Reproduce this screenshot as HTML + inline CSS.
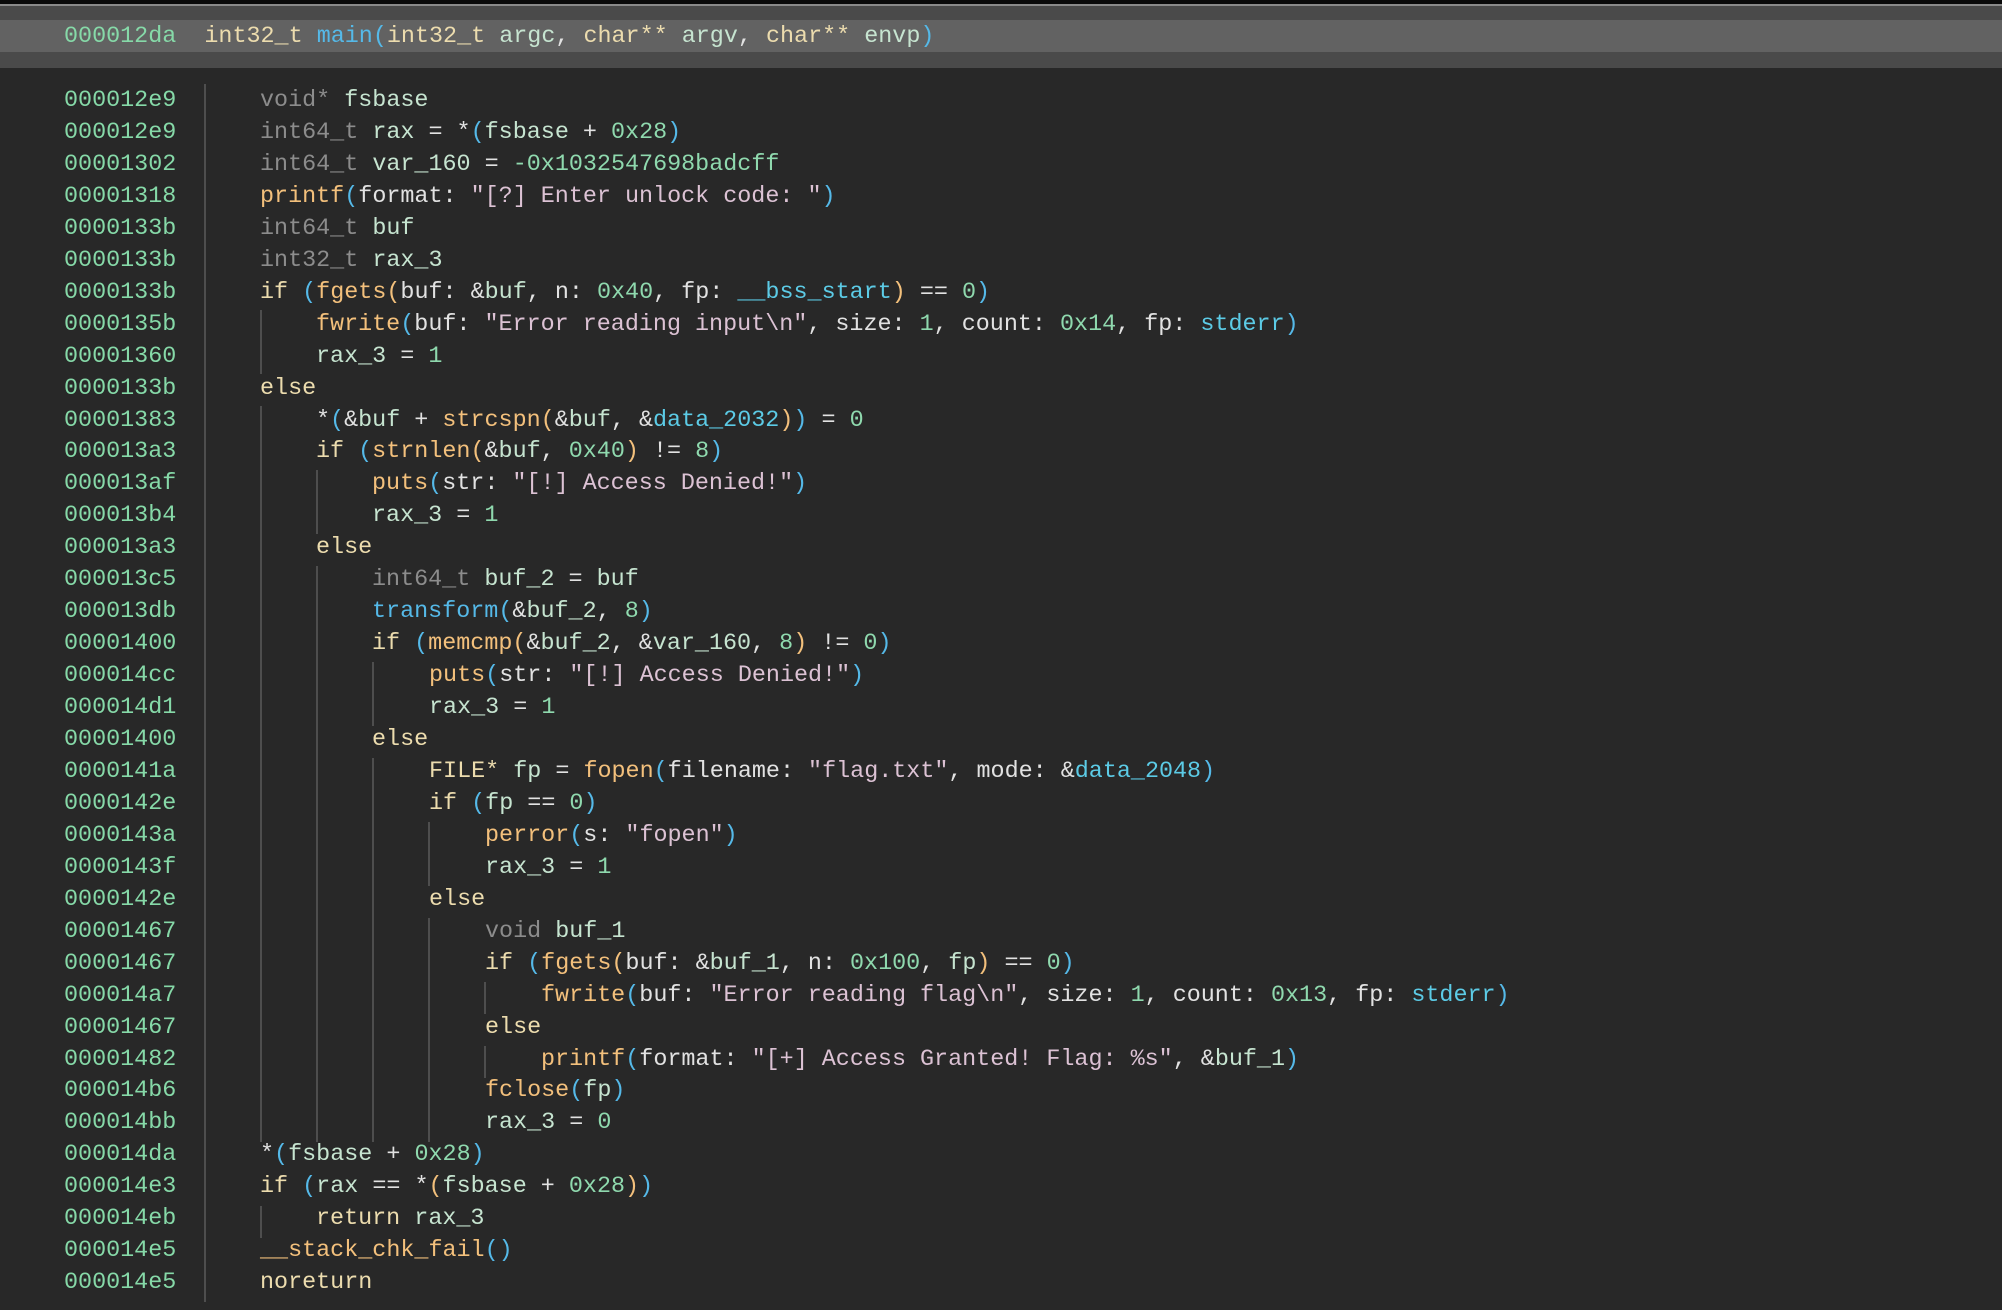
<!DOCTYPE html>
<html><head><meta charset="utf-8"><style>
html,body{margin:0;padding:0;}
body{width:2002px;height:1310px;background:#282828;position:relative;overflow:hidden;font-family:"Liberation Mono",monospace;font-size:23.4px;}
.top{position:absolute;left:0;top:0;width:2002px;height:4px;background:#0a0a0a;}
.top2{position:absolute;left:0;top:4px;width:2002px;height:2px;background:#8a8a8a;}
.hdr{position:absolute;left:0;top:6px;width:2002px;height:62px;background:#4a4a4a;}
.band{position:absolute;left:0;top:20px;width:2002px;height:32px;background:#626262;}
.l{position:absolute;white-space:pre;height:32px;line-height:32px;color:#e2e2e2;}
.g{position:absolute;width:2px;background:#4e4e4e;}
.a{color:#86d9a8}.t{color:#8c8c8c}.v{color:#c6e4d0}.f{color:#f3c07c}.k{color:#ecdcae}.s{color:#dcc2d4}.n{color:#8fd9ae}.p{color:#55b9e8}.o{color:#f3c07c}.d{color:#5ccbe6}.m{color:#55b9e8}
</style></head><body>
<div class="top"></div><div class="top2"></div><div class="hdr"></div><div class="band"></div>
<div class="l" style="left:64px;top:21px"><span class="a">000012da</span>  <span class="k">int32_t</span> <span class="m">main</span><span class="p">(</span><span class="k">int32_t</span> <span class="v">argc</span>, <span class="k">char**</span> <span class="v">argv</span>, <span class="k">char**</span> <span class="v">envp</span><span class="p">)</span></div>

<div class="g" style="left:204px;top:84px;height:1218px"></div>
<div class="g" style="left:260px;top:310px;height:64px"></div>
<div class="g" style="left:260px;top:406px;height:736px"></div>
<div class="g" style="left:260px;top:1206px;height:32px"></div>
<div class="g" style="left:316px;top:470px;height:64px"></div>
<div class="g" style="left:316px;top:566px;height:576px"></div>
<div class="g" style="left:372px;top:662px;height:64px"></div>
<div class="g" style="left:372px;top:758px;height:384px"></div>
<div class="g" style="left:428px;top:822px;height:64px"></div>
<div class="g" style="left:428px;top:918px;height:224px"></div>
<div class="g" style="left:484px;top:982px;height:32px"></div>
<div class="g" style="left:484px;top:1046px;height:32px"></div>

<div id="c"></div>
<script>
var L=[
["000012e9",0,'<span class="t">void*</span> <span class="v">fsbase</span>'],
["000012e9",0,'<span class="t">int64_t</span> <span class="v">rax</span> = *<span class="p">(</span><span class="v">fsbase</span> + <span class="n">0x28</span><span class="p">)</span>'],
["00001302",0,'<span class="t">int64_t</span> <span class="v">var_160</span> = <span class="n">-0x1032547698badcff</span>'],
["00001318",0,'<span class="f">printf</span><span class="p">(</span>format: <span class="s">"[?] Enter unlock code: "</span><span class="p">)</span>'],
["0000133b",0,'<span class="t">int64_t</span> <span class="v">buf</span>'],
["0000133b",0,'<span class="t">int32_t</span> <span class="v">rax_3</span>'],
["0000133b",0,'<span class="k">if</span> <span class="p">(</span><span class="f">fgets</span><span class="o">(</span>buf: &amp;<span class="v">buf</span>, n: <span class="n">0x40</span>, fp: <span class="d">__bss_start</span><span class="o">)</span> == <span class="n">0</span><span class="p">)</span>'],
["0000135b",1,'<span class="f">fwrite</span><span class="p">(</span>buf: <span class="s">"Error reading input\\n"</span>, size: <span class="n">1</span>, count: <span class="n">0x14</span>, fp: <span class="d">stderr</span><span class="p">)</span>'],
["00001360",1,'<span class="v">rax_3</span> = <span class="n">1</span>'],
["0000133b",0,'<span class="k">else</span>'],
["00001383",1,'*<span class="p">(</span>&amp;<span class="v">buf</span> + <span class="f">strcspn</span><span class="o">(</span>&amp;<span class="v">buf</span>, &amp;<span class="d">data_2032</span><span class="o">)</span><span class="p">)</span> = <span class="n">0</span>'],
["000013a3",1,'<span class="k">if</span> <span class="p">(</span><span class="f">strnlen</span><span class="o">(</span>&amp;<span class="v">buf</span>, <span class="n">0x40</span><span class="o">)</span> != <span class="n">8</span><span class="p">)</span>'],
["000013af",2,'<span class="f">puts</span><span class="p">(</span>str: <span class="s">"[!] Access Denied!"</span><span class="p">)</span>'],
["000013b4",2,'<span class="v">rax_3</span> = <span class="n">1</span>'],
["000013a3",1,'<span class="k">else</span>'],
["000013c5",2,'<span class="t">int64_t</span> <span class="v">buf_2</span> = <span class="v">buf</span>'],
["000013db",2,'<span class="m">transform</span><span class="p">(</span>&amp;<span class="v">buf_2</span>, <span class="n">8</span><span class="p">)</span>'],
["00001400",2,'<span class="k">if</span> <span class="p">(</span><span class="f">memcmp</span><span class="o">(</span>&amp;<span class="v">buf_2</span>, &amp;<span class="v">var_160</span>, <span class="n">8</span><span class="o">)</span> != <span class="n">0</span><span class="p">)</span>'],
["000014cc",3,'<span class="f">puts</span><span class="p">(</span>str: <span class="s">"[!] Access Denied!"</span><span class="p">)</span>'],
["000014d1",3,'<span class="v">rax_3</span> = <span class="n">1</span>'],
["00001400",2,'<span class="k">else</span>'],
["0000141a",3,'<span class="k">FILE*</span> <span class="v">fp</span> = <span class="f">fopen</span><span class="p">(</span>filename: <span class="s">"flag.txt"</span>, mode: &amp;<span class="d">data_2048</span><span class="p">)</span>'],
["0000142e",3,'<span class="k">if</span> <span class="p">(</span><span class="v">fp</span> == <span class="n">0</span><span class="p">)</span>'],
["0000143a",4,'<span class="f">perror</span><span class="p">(</span>s: <span class="s">"fopen"</span><span class="p">)</span>'],
["0000143f",4,'<span class="v">rax_3</span> = <span class="n">1</span>'],
["0000142e",3,'<span class="k">else</span>'],
["00001467",4,'<span class="t">void</span> <span class="v">buf_1</span>'],
["00001467",4,'<span class="k">if</span> <span class="p">(</span><span class="f">fgets</span><span class="o">(</span>buf: &amp;<span class="v">buf_1</span>, n: <span class="n">0x100</span>, <span class="v">fp</span><span class="o">)</span> == <span class="n">0</span><span class="p">)</span>'],
["000014a7",5,'<span class="f">fwrite</span><span class="p">(</span>buf: <span class="s">"Error reading flag\\n"</span>, size: <span class="n">1</span>, count: <span class="n">0x13</span>, fp: <span class="d">stderr</span><span class="p">)</span>'],
["00001467",4,'<span class="k">else</span>'],
["00001482",5,'<span class="f">printf</span><span class="p">(</span>format: <span class="s">"[+] Access Granted! Flag: %s"</span>, &amp;<span class="v">buf_1</span><span class="p">)</span>'],
["000014b6",4,'<span class="f">fclose</span><span class="p">(</span><span class="v">fp</span><span class="p">)</span>'],
["000014bb",4,'<span class="v">rax_3</span> = <span class="n">0</span>'],
["000014da",0,'*<span class="p">(</span><span class="v">fsbase</span> + <span class="n">0x28</span><span class="p">)</span>'],
["000014e3",0,'<span class="k">if</span> <span class="p">(</span><span class="v">rax</span> == *<span class="o">(</span><span class="v">fsbase</span> + <span class="n">0x28</span><span class="o">)</span><span class="p">)</span>'],
["000014eb",1,'<span class="k">return</span> <span class="v">rax_3</span>'],
["000014e5",0,'<span class="f">__stack_chk_fail</span><span class="p">()</span>'],
["000014e5",0,'<span class="k">noreturn</span>']
];
var h='';
for(var i=0;i<L.length;i++){var y=Math.round(85+31.95*i);
h+='<div class="l a" style="left:64px;top:'+y+'px">'+L[i][0]+'</div>';
h+='<div class="l" style="left:'+Math.round(260+56.2*L[i][1])+'px;top:'+y+'px">'+L[i][2]+'</div>';}
document.getElementById('c').innerHTML=h;
</script>
</body></html>
